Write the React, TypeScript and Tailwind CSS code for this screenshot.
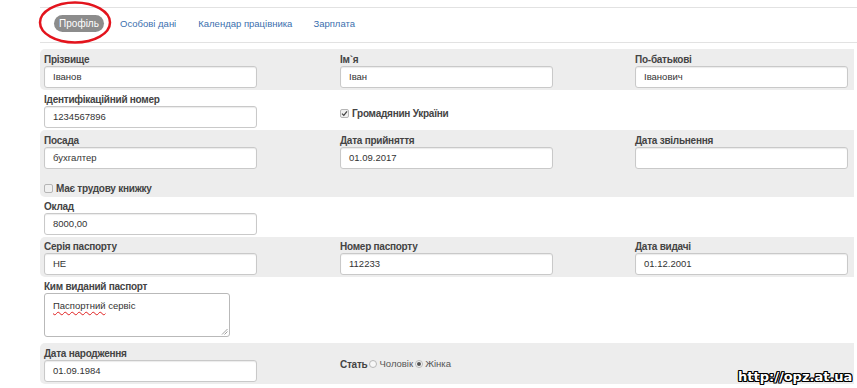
import React from "react";

const Label = ({ children }: { children: React.ReactNode }) => (
  <div className="h-[13px] leading-[13px] text-[10px] font-bold tracking-[-0.25px] text-[#444] whitespace-nowrap">{children}</div>
);

const Input = ({ value }: { value: string }) => (
  <div className="h-[22px] w-[213px] bg-white border border-[#c9c9c9] rounded-[3px] shadow-[inset_0_1px_1px_rgba(0,0,0,0.08)] pl-[8px] flex items-center text-[9.5px] text-[#333]">
    {value}
  </div>
);

const Field = ({ label, value }: { label: string; value: string }) => (
  <div>
    <Label>{label}</Label>
    <Input value={value} />
  </div>
);

const Check = ({ checked }: { checked?: boolean }) => (
  <span className="inline-flex items-center justify-center w-[9px] h-[9px] border border-[#b5b5b5] rounded-[2px] bg-[#f0f0f0] mr-[3px]">
    {checked && (
      <svg width="7" height="7" viewBox="0 0 7 7">
        <path d="M1 3.6 L2.8 5.4 L6 1.4" fill="none" stroke="#444" strokeWidth="1.3" />
      </svg>
    )}
  </span>
);

const Radio = ({ checked }: { checked?: boolean }) => (
  <span className="inline-flex items-center justify-center w-[8px] h-[8px] rounded-full border border-[#b8b8b8] bg-[#f7f7f7] mx-[2px]">
    {checked && <span className="w-[4px] h-[4px] rounded-full bg-[#555]" />}
  </span>
);

const Row = ({ gray, className, children }: { gray?: boolean; className?: string; children: React.ReactNode }) => (
  <div className={(gray ? "bg-[#ededed] rounded-l-[5px] " : "") + "pl-[4px] w-[814px] " + (className || "")}>{children}</div>
);

export default function App() {
  return (
    <div className="w-[857px] h-[388px] bg-white relative overflow-hidden font-['Liberation_Sans',Arial,sans-serif]">
      <div className="pl-[40px] pt-[7px]">
        <div className="h-[36px] border-t border-b border-[#e2e2e2] flex items-start pt-[7px] text-[9.5px]">
          <span className="ml-[14px] h-[17px] w-[50px] justify-center rounded-full bg-[#8c8c8c] text-white text-[10px] flex items-center">Профіль</span>
          <span className="ml-[16px] leading-[17px] text-[#3c6fae]">Особові дані</span>
          <span className="ml-[22px] leading-[17px] text-[#3c6fae]">Календар працівника</span>
          <span className="ml-[21px] leading-[17px] text-[#3c6fae]">Зарплата</span>
        </div>

        <div className="mt-[6px]">
          <Row gray className="pt-[4px] pb-[2px]">
            <div className="grid grid-cols-[296px_295px_1fr]">
              <Field label="Прізвище" value="Іванов" />
              <Field label="Ім`я" value="Іван" />
              <Field label="По-батькові" value="Іванович" />
            </div>
          </Row>
          <Row className="pt-[3px] pb-[2px]">
            <div className="grid grid-cols-[296px_295px_1fr]">
              <Field label="Ідентифікаційний номер" value="1234567896" />
              <div className="pt-[13px]">
                <div className="h-[14px] flex items-center text-[10px] font-bold tracking-[-0.25px] text-[#444]">
                  <Check checked />
                  Громадянин України
                </div>
              </div>
              <div />
            </div>
          </Row>
          <Row gray className="pt-[4px] pb-[1px]">
            <div className="grid grid-cols-[296px_295px_1fr]">
              <Field label="Посада" value="бухгалтер" />
              <Field label="Дата прийняття" value="01.09.2017" />
              <Field label="Дата звільнення" value="" />
            </div>
            <div className="mt-[12px] mb-[1px] h-[14px] flex items-center text-[10px] font-bold tracking-[-0.25px] text-[#444]">
              <Check />
              Має трудову книжку
            </div>
          </Row>
          <Row className="pt-[3px] pb-[2px]">
            <Field label="Оклад" value="8000,00" />
          </Row>
          <Row gray className="pt-[3px] pb-[2px]">
            <div className="grid grid-cols-[296px_295px_1fr]">
              <Field label="Серія паспорту" value="НЕ" />
              <Field label="Номер паспорту" value="112233" />
              <Field label="Дата видачі" value="01.12.2001" />
            </div>
          </Row>
          <Row className="pt-[3px] pb-[6px]">
            <Label>Ким виданий паспорт</Label>
            <div className="relative h-[44px] w-[186px] bg-white border border-[#b9b9b9] rounded-[3px] pl-[8px] pt-[5px] text-[9.5px] text-[#333] leading-[13px]">
              <span className="underline decoration-wavy decoration-[#e02020] decoration-1 underline-offset-2">Паспортний</span> сервіс
              <svg className="absolute right-[1px] bottom-[1px]" width="7" height="7" viewBox="0 0 7 7">
                <path d="M1 6.5 L6.5 1 M3.5 6.5 L6.5 3.5" stroke="#888" strokeWidth="0.8" />
              </svg>
            </div>
          </Row>
          <Row gray className="pt-[4px] pb-[2px]">
            <div className="grid grid-cols-[296px_295px_1fr]">
              <Field label="Дата народження" value="01.09.1984" />
              <div className="pt-[10px]">
                <div className="h-[14px] flex items-center text-[9.5px] text-[#555]">
                  <span className="font-bold text-[10px] tracking-[-0.25px] text-[#444]">Стать</span>
                  <Radio />
                  <span>Чоловік</span>
                  <Radio checked />
                  <span>Жінка</span>
                </div>
              </div>
              <div />
            </div>
          </Row>
        </div>
      </div>

      <svg className="absolute left-0 top-0 pointer-events-none" width="130" height="50" viewBox="0 0 130 50">
        <ellipse cx="75" cy="22.5" rx="35" ry="20" fill="none" stroke="#e3141d" strokeWidth="2.5" />
      </svg>

      <div className="absolute left-[738px] top-[369px] text-[13px] leading-[16px] font-bold text-white font-['DejaVu_Sans',sans-serif] [text-shadow:1px_0_0_#000,-1px_0_0_#000,0_1px_0_#000,0_-1px_0_#000,1px_1px_0_#000,-1px_-1px_0_#000,1px_-1px_0_#000,-1px_1px_0_#000]">
        http://opz.at.ua
      </div>
    </div>
  );
}
